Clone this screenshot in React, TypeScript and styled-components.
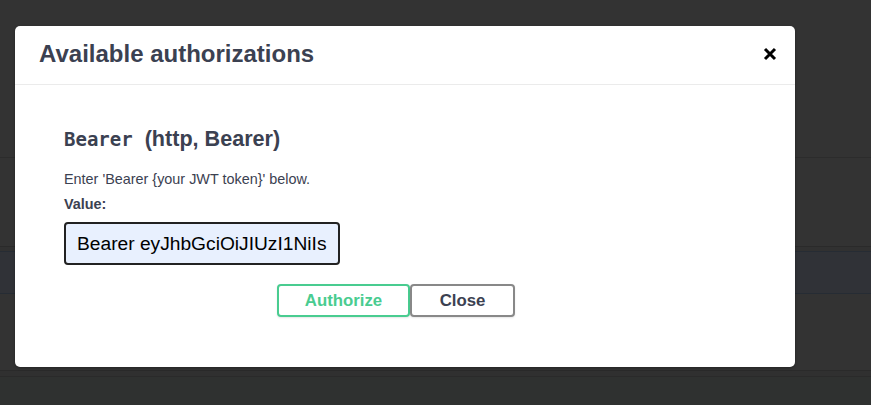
import React from "react";
import styled, { createGlobalStyle } from "styled-components";

const Global = createGlobalStyle`
  html, body { margin: 0; padding: 0; background: #333333; }
  body { font-family: "Liberation Sans", Arial, sans-serif; }
  * { box-sizing: border-box; }
`;

const Page = styled.div`
  position: relative;
  width: 871px;
  height: 405px;
  overflow: hidden;
  background: #333333;
`;

const Backdrop = styled.div`
  display: flex;
  flex-direction: column;
  height: 100%;
`;

const Strip = styled.div<{ $h: number; $bg: string; $line?: string }>`
  height: ${(p) => p.$h}px;
  flex: none;
  background: ${(p) => p.$bg};
  border-bottom: ${(p) => (p.$line ? `1px solid ${p.$line}` : "none")};
`;

const Overlay = styled.div`
  position: absolute;
  inset: 0;
  padding: 26px 0 0 15px;
`;

const Modal = styled.div`
  width: 780px;
  height: 341px;
  background: #ffffff;
  border-radius: 5px;
  box-shadow: 0 1px 3px rgba(0, 0, 0, 0.3);
  display: flex;
  flex-direction: column;
`;

const Header = styled.div`
  height: 59px;
  flex: none;
  display: flex;
  align-items: center;
  padding: 0 13px 2px 24px;
  border-bottom: 1px solid #ebebeb;
`;

const Title = styled.h3`
  flex: 1;
  margin: 0;
  font-family: "Liberation Sans", Arial, sans-serif;
  font-size: 24px;
  font-weight: 700;
  color: #3b4151;
`;

const CloseX = styled.button`
  border: none;
  background: none;
  padding: 0;
  width: 24px;
  height: 24px;
  display: flex;
  align-items: center;
  justify-content: center;
  cursor: pointer;
`;

const Body = styled.div`
  padding: 40px 0 0 49px;
  display: flex;
  flex-direction: column;
`;

const SchemeTitle = styled.h4`
  margin: 0;
  font-family: "Liberation Sans", Arial, sans-serif;
  font-size: 21.6px;
  font-weight: 700;
  color: #3b4151;
  line-height: 28px;
`;

const Code = styled.code`
  font-family: "DejaVu Sans Mono", monospace;
  font-size: 19px;
  font-weight: 700;
`;

const Desc = styled.p`
  margin: 17px 0 0;
  font-size: 14.4px;
  color: #3b4151;
  line-height: 18px;
`;

const Label = styled.label`
  margin-top: 7px;
  font-size: 14.4px;
  font-weight: 700;
  color: #3b4151;
  line-height: 18px;
`;

const Input = styled.input`
  margin-top: 9px;
  width: 276px;
  height: 43px;
  border: 2px solid #222222;
  border-radius: 4px;
  background: #e8f0fe;
  padding: 0 11px;
  font-family: "Liberation Sans", Arial, sans-serif;
  font-size: 19.2px;
  color: #000;
  outline: none;
`;

const Buttons = styled.div`
  display: flex;
  margin-left: -49px;
  padding: 19px 0 0 262px;
`;

const Btn = styled.button<{ $variant: "auth" | "close" }>`
  height: 33px;
  border: 2px solid ${(p) => (p.$variant === "auth" ? "#49cc90" : "#888888")};
  color: ${(p) => (p.$variant === "auth" ? "#49cc90" : "#3b4151")};
  width: ${(p) => (p.$variant === "auth" ? "133px" : "105px")};
  background: #fff;
  border-radius: 4px;
  font-family: "Liberation Sans", Arial, sans-serif;
  font-size: 16.8px;
  font-weight: 700;
  box-shadow: 0 1px 2px rgba(0, 0, 0, 0.1);
  padding: 0;
  cursor: pointer;
  line-height: ${(p) => (p.$variant === "auth" ? "25px" : "29px")};
`;

export default function App() {
  return (
    <Page>
      <Global />
      <Backdrop>
        <Strip $h={158} $bg="#333333" $line="#2c2c2c" />
        <Strip $h={89} $bg="#333333" $line="#2a2a2a" />
        <Strip $h={5} $bg="#313131" $line="#262c34" />
        <Strip $h={42} $bg="#303237" $line="#262c34" />
        <Strip $h={77} $bg="#333333" $line="#2a2a2a" />
        <Strip $h={6} $bg="#303030" $line="#2a2a2a" />
        <Strip $h={30} $bg="#2f3130" />
      </Backdrop>
      <Overlay>
        <Modal>
          <Header>
            <Title>Available authorizations</Title>
            <CloseX aria-label="Close">
              <svg width="14" height="14" viewBox="0 0 14 14">
                <path d="M2 2 L12 12 M12 2 L2 12" stroke="#000" strokeWidth="3" strokeLinecap="butt" />
              </svg>
            </CloseX>
          </Header>
          <Body>
            <SchemeTitle>
              <Code>Bearer</Code>&nbsp; (http, Bearer)
            </SchemeTitle>
            <Desc>Enter 'Bearer {"{your JWT token}"}' below.</Desc>
            <Label>Value:</Label>
            <Input defaultValue="Bearer eyJhbGciOiJIUzI1NiIs" readOnly />
            <Buttons>
              <Btn $variant="auth">Authorize</Btn>
              <Btn $variant="close">Close</Btn>
            </Buttons>
          </Body>
        </Modal>
      </Overlay>
    </Page>
  );
}
